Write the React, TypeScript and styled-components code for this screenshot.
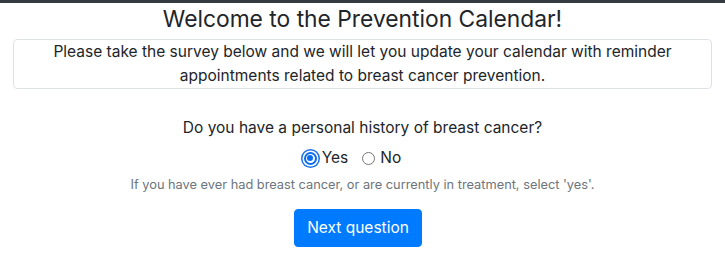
import React, { useState } from "react";
import styled, { createGlobalStyle } from "styled-components";

const Global = createGlobalStyle`
  html, body { margin: 0; padding: 0; background: #fff; }
  body { font-family: Inter, "Liberation Sans", Arial, sans-serif; color: #212529; }
`;

const TopBar = styled.div`
  height: 3px;
  background: #343a40;
`;

const Page = styled.div`
  display: flex;
  flex-direction: column;
  align-items: center;
  padding: 0 13px;
`;

const Title = styled.h1`
  margin: 2px 0 6px;
  font-size: 22.8px;
  font-weight: 400;
  line-height: 28px;
  text-align: center;
`;

const Intro = styled.div`
  align-self: stretch;
  border: 1px solid #dee2e6;
  border-radius: 4px;
  padding: 0 12px;
  font-size: 15.5px;
  line-height: 24px;
  text-align: center;
`;

const Question = styled.p`
  margin: 27px 0 6px;
  font-size: 15.5px;
  line-height: 24px;
`;

const Options = styled.div`
  display: flex;
  gap: 12px;
  align-items: center;
  padding-right: 22px;
`;

const Option = styled.label`
  display: flex;
  align-items: center;
  gap: 3px;
  font-size: 15.5px;
  line-height: 24px;
  cursor: pointer;
`;

const Radio = styled.span<{ $checked: boolean }>`
  box-sizing: border-box;
  width: 13px;
  height: 13px;
  border-radius: 50%;
  display: inline-block;
  position: relative;
  ${(p) =>
    p.$checked
      ? `background: #fff; border: 2px solid #0a6cf0; box-shadow: 0 0 0 1.5px #fff, 0 0 0 3px #1a73e8;
         &::after { content: ""; position: absolute; inset: 1.5px; border-radius: 50%; background: #0a6cf0; }`
      : `border: 1px solid #767676; background: #fff;`}
  margin: 0 2px;
`;

const Help = styled.small`
  margin-top: 7px;
  font-size: 12.8px;
  line-height: 16px;
  color: #6c757d;
`;

const Button = styled.button`
  margin: 16px 9px 0 0;
  background: #007bff;
  color: #fff;
  border: 1px solid #007bff;
  border-radius: 4px;
  font-family: inherit;
  font-size: 15.5px;
  line-height: 24px;
  padding: 6px 12px;
  cursor: pointer;
`;

export default function App() {
  const [val, setVal] = useState("yes");
  return (
    <>
      <Global />
      <TopBar />
      <Page>
        <Title>Welcome to the Prevention Calendar!</Title>
        <Intro>
          Please take the survey below and we will let you update your calendar with reminder
          appointments related to breast cancer prevention.
        </Intro>
        <Question>Do you have a personal history of breast cancer?</Question>
        <Options>
          <Option onClick={() => setVal("yes")}>
            <Radio $checked={val === "yes"} />
            Yes
          </Option>
          <Option onClick={() => setVal("no")}>
            <Radio $checked={val === "no"} />
            No
          </Option>
        </Options>
        <Help>If you have ever had breast cancer, or are currently in treatment, select 'yes'.</Help>
        <Button>Next question</Button>
      </Page>
    </>
  );
}
